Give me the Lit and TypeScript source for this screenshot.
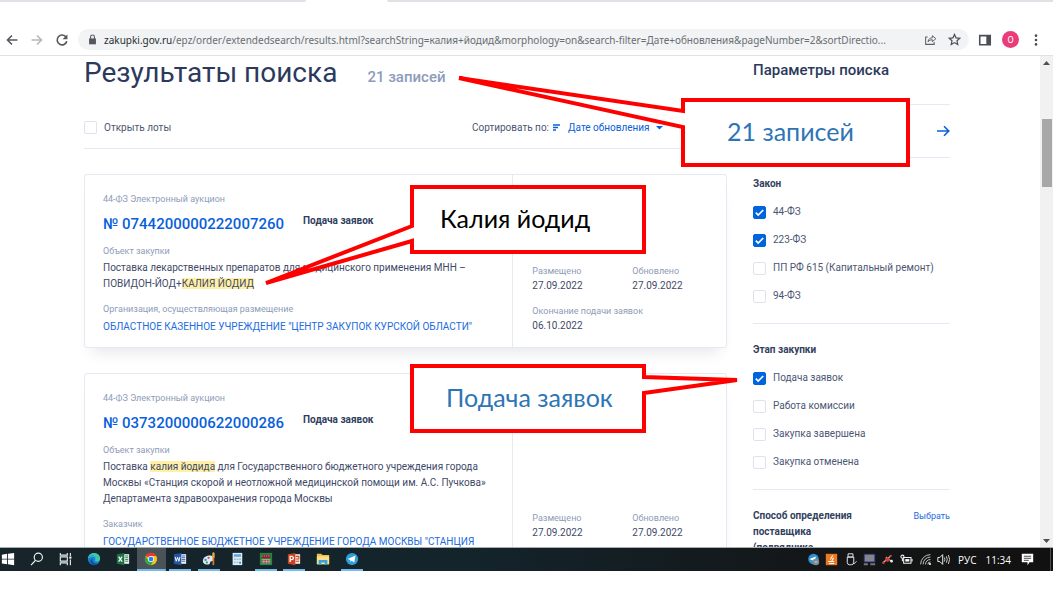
import { LitElement, html, css, svg, nothing } from "lit";
import { customElement, property } from "lit/decorators.js";
import { classMap } from "lit/directives/class-map.js";

interface Tender {
  type: string;
  number: string;
  stage: string;
  before: string;
  match: string;
  after: string;
  orgLabel: string;
  org: string;
  placed: string;
  updated: string;
  deadline?: string;
}

const tenders: Tender[] = [
  {
    type: "44-ФЗ Электронный аукцион",
    number: "№ 0744200000222007260",
    stage: "Подача заявок",
    before: "Поставка лекарственных препаратов для медицинского применения МНН – ПОВИДОН-ЙОД+",
    match: "КАЛИЯ ЙОДИД",
    after: "",
    orgLabel: "Организация, осуществляющая размещение",
    org: 'ОБЛАСТНОЕ КАЗЕННОЕ УЧРЕЖДЕНИЕ "ЦЕНТР ЗАКУПОК КУРСКОЙ ОБЛАСТИ"',
    placed: "27.09.2022",
    updated: "27.09.2022",
    deadline: "06.10.2022",
  },
  {
    type: "44-ФЗ Электронный аукцион",
    number: "№ 0373200000622000286",
    stage: "Подача заявок",
    before: "Поставка ",
    match: "калия йодида",
    after:
      " для Государственного бюджетного учреждения города Москвы «Станция скорой и неотложной медицинской помощи им. А.С. Пучкова» Департамента здравоохранения города Москвы",
    orgLabel: "Заказчик",
    org: 'ГОСУДАРСТВЕННОЕ БЮДЖЕТНОЕ УЧРЕЖДЕНИЕ ГОРОДА МОСКВЫ "СТАНЦИЯ',
    placed: "27.09.2022",
    updated: "27.09.2022",
  },
];

const laws = [
  { text: "44-ФЗ", on: true },
  { text: "223-ФЗ", on: true },
  { text: "ПП РФ 615 (Капитальный ремонт)", on: false },
  { text: "94-ФЗ", on: false },
];

const stages = [
  { text: "Подача заявок", on: true },
  { text: "Работа комиссии", on: false },
  { text: "Закупка завершена", on: false },
  { text: "Закупка отменена", on: false },
];

@customElement("check-item")
class CheckItem extends LitElement {
  @property() text = "";
  @property({ type: Boolean }) on = false;

  static styles = css`
    :host { display: block; }
    .item { display: flex; align-items: center; gap: 7px; font-size: 10px; line-height: 16px; color: #4c5673; }
    .box {
      appearance: none; flex: none; width: 13px; height: 13px; margin: 0;
      border: 1px solid #dfe2ec; border-radius: 2px; background: #fff;
    }
    .box:checked {
      border-color: #0065dc;
      background: #0065dc url("data:image/svg+xml,%3Csvg xmlns='http://www.w3.org/2000/svg' viewBox='0 0 11 11'%3E%3Cpath d='M1.8 5.6 4.2 8 9.2 3' fill='none' stroke='white' stroke-width='1.7'/%3E%3C/svg%3E") center / 11px no-repeat;
    }
  `;

  render() {
    return html`<label class="item"><input class="box" type="checkbox" .checked=${this.on} /><span>${this.text}</span></label>`;
  }
}

@customElement("tender-card")
class TenderCard extends LitElement {
  @property({ attribute: false }) tender!: Tender;

  static styles = css`
    :host { display: block; }
    .card {
      display: grid; grid-template-columns: minmax(0, 2fr) minmax(0, 1fr);
      border: 1px solid #e6e8f2; border-radius: 3px; background: #fff;
      box-shadow: 0 12px 14px -8px rgba(40, 50, 80, 0.12);
    }
    .info { padding: 16px 18px 11px; }
    .muted { margin: 0; font-size: 9px; line-height: 16px; color: #8e9cb8; }
    .head { display: flex; align-items: flex-start; gap: 19px; margin: 6px 0 8px; }
    .number { font-size: 15px; line-height: 22px; font-weight: 500; color: #0a5fdb; text-decoration: none; }
    .stage { font-size: 10px; line-height: 16px; font-weight: 700; color: #2f3d60; }
    .subject { margin: 1px 0 9px; font-size: 10px; line-height: 16px; color: #3f4a68; }
    .hit { background: #fff0a5; color: inherit; }
    .org { display: block; font-size: 10px; line-height: 19px; color: #226be0; text-decoration: none; white-space: nowrap; }
    .dates {
      display: grid; grid-template-columns: 100px 1fr; align-content: end; row-gap: 10px;
      border-left: 1px solid #e6e8f2; padding: 13px 0 13px 19px; margin: 0;
    }
    .short { padding-bottom: 21px; }
    .wide { grid-column: 1 / -1; }
    .term { font-size: 9px; line-height: 14px; color: #8e9cb8; }
    .date { margin: 0; font-size: 10px; line-height: 16px; color: #3f4a68; }
  `;

  render() {
    const t = this.tender;
    return html`
      <article class="card">
        <div class="info">
          <p class="muted">${t.type}</p>
          <div class="head">
            <a class="number" href="#">${t.number}</a>
            <span class="stage">${t.stage}</span>
          </div>
          <p class="muted">Объект закупки</p>
          <p class="subject">${t.before}<mark class="hit">${t.match}</mark>${t.after}</p>
          <p class="muted">${t.orgLabel}</p>
          <a class="org" href="#">${t.org}</a>
        </div>
        <dl class=${classMap({ dates: true, short: !t.deadline })}>
          <div><dt class="term">Размещено</dt><dd class="date">${t.placed}</dd></div>
          <div><dt class="term">Обновлено</dt><dd class="date">${t.updated}</dd></div>
          ${t.deadline
            ? html`<div class="wide"><dt class="term">Окончание подачи заявок</dt><dd class="date">${t.deadline}</dd></div>`
            : nothing}
        </dl>
      </article>
    `;
  }
}

const icon = (body: unknown, size = 16) =>
  html`<svg width=${size} height=${size} viewBox="0 0 16 16" fill="none" aria-hidden="true">${body}</svg>`;

const back = svg`<path d="M14.2 8H3M8 2.8 2.8 8 8 13.2" stroke="currentColor" stroke-width="1.8"/>`;
const forward = svg`<path d="M1.8 8H13M8 2.8 13.2 8 8 13.2" stroke="currentColor" stroke-width="1.8"/>`;
const reload = svg`<path d="M12.6 4.6A5.6 5.6 0 1 0 13.5 9.4" stroke="currentColor" stroke-width="1.9"/><path d="M14.2 1.6v5.6H8.6z" fill="currentColor"/>`;
const lock = svg`<path d="M3 6.4h10V15H3z" fill="#54585d"/><path d="M5.2 7V4.3a2.8 2.8 0 0 1 5.6 0V7" stroke="#54585d" stroke-width="1.6"/>`;
const share = svg`<path d="M4.5 5H2v9h10.500v-3" stroke="#5f6368" stroke-width="1.3"/><path d="M5 11c.3-3.600 2.300-5 5.300-5.100V3.300L14.600 7l-4.300 3.600V8.300C8 8.300 6.400 9 5 11z" stroke="#5f6368" stroke-width="1.200" stroke-linejoin="round"/>`;
const star = svg`<path d="m8 1.800 1.900 4.200 4.600.5-3.400 3.100.9 4.500L8 11.800l-4 2.300.9-4.500L1.500 6.500l4.600-.5z" stroke="#4b4f54" stroke-width="1.500"/>`;
const panel = svg`<path d="M2 3h12v10.500H2z" stroke="#4b4f54" stroke-width="1.800"/><path d="M9.500 3H14v10.500H9.500z" fill="#4b4f54"/>`;
const dots = svg`<g fill="#4b4f54"><circle cx="8" cy="3" r="1.500"/><circle cx="8" cy="8" r="1.500"/><circle cx="8" cy="13" r="1.500"/></g>`;

const apps = [
  { name: "Пуск", art: svg`<path d="M1 3l6-.9v5.500H1zM8 2l7-1v6.600H8zM1 8.500h6V14l-6-.9zM8 8.500h7V15l-7-1z" fill="#fff"/>` },
  { name: "Поиск", art: svg`<circle cx="9.500" cy="6" r="4.700" stroke="#f2f4f5" stroke-width="1.300"/><path d="M6.200 9.500 1.200 15" stroke="#f2f4f5" stroke-width="1.400"/>` },
  { name: "Представление задач", art: svg`<path d="M1.500 1v2.500h8V1M1.500 15v-2.500h8V15M1.500 5.500h8v5h-8zM13 1v3.500M13 8.500V15" stroke="#e8eaeb" stroke-width="1.300"/><path d="M11.800 5.200h2.400v2.400h-2.400z" fill="#fff"/>` },
  { name: "Edge", art: svg`<circle cx="8" cy="8" r="7" fill="#1680d2"/><path d="M1 7.500C1.300 3.500 4.300 1 8 1c4.200 0 7 2.900 7 6 0 2.500-1.800 3.900-3.900 3.900-1.500 0-2.400-.6-1.800-1.700.8-1.500.2-3.700-2.600-3.700-2.500 0-4.800.8-5.700 2z" fill="#42c6a0"/><path d="M1 7.500C1.600 4 5 2.800 7.500 3.600c2.200.7 2.700 2.600 2.400 4-.6-1.500-2-2.100-3.200-2-2.500.1-4.800.9-5.700 1.900z" fill="#29a8df"/><path d="M6.200 7.600c-1 3 1.500 6.200 6.400 5.500C10.200 15.600 5.500 15.500 4 12c-.8-2 .4-4 2.200-4.400z" fill="#104f9c"/>` },
  { name: "Excel", art: svg`<path d="M8 2.500h7v11H8z" fill="#eef6f0"/><path d="M10.500 4.500H14M10.500 6.500H14M10.500 8.500H14M10.500 10.500H14" stroke="#227447" stroke-width="1"/><path d="M1 2.500 9.500 1v14L1 13.500z" fill="#1f7145"/><path d="m3 5.300 4 5.600M7 5.300l-4 5.600" stroke="#fff" stroke-width="1.400"/>` },
  { name: "Chrome", active: true, run: true, art: svg`<circle cx="8" cy="8" r="7" fill="#fbc116"/><path d="M8 8 1.900 4.500A7 7 0 0 1 14.100 4.500H8z" fill="#e33b2e"/><path d="M1.900 4.500A7 7 0 0 0 8 15l3-5.200L5 9.700z" fill="#2da94f"/><circle cx="8" cy="8" r="3.500" fill="#fff"/><circle cx="8" cy="8" r="2.700" fill="#2f7de9"/>` },
  { name: "Word", run: true, art: svg`<path d="M8 2.500h7v11H8z" fill="#eef3fb"/><path d="M10 4.500h4M10 6.500h4M10 8.500h4M10 10.500h4" stroke="#2b579a" stroke-width="1"/><path d="M1 2.500 9.500 1v14L1 13.500z" fill="#2456a6"/><path d="m2.500 5.600 1.200 5 1.500-4.600 1.500 4.600 1.200-5" stroke="#fff" stroke-width="1.100"/>` },
  { name: "Paint", run: true, art: svg`<path d="M1 10.500C1 6.500 4.500 4 8.500 4c3.700 0 5.500 2.200 5 4.600-.4 2-2.400 1.700-3.500 2.200-1.200.6 0 3.600-3.600 3.600C3.500 14.400 1 13 1 10.500z" fill="#dbeaf5"/><circle cx="4" cy="9" r="1.300" fill="#2a83d6"/><circle cx="7.500" cy="6.700" r="1.300" fill="#e64b36"/><circle cx="5.500" cy="12" r="1.300" fill="#43a84a"/><path d="M13 6.500V15" stroke="#d07b28" stroke-width="2"/><path d="M11.700 1.500 13 0l1.500 1.500v5h-2.800z" fill="#f0a23a"/>` },
  { name: "Калькулятор", art: svg`<path d="M3 1h11v14H3z" fill="#dcebf6"/><path d="M4.500 2.500h8v3h-8z" fill="#5da9dd"/><path d="M4.500 7.500h2v1.500h-2zm3 0h2v1.500h-2zM4.500 11h2v1.500h-2zm3 0h2v1.500h-2zm3-3.500h2v1.500h-2z" fill="#9fb9cc"/><path d="M10.500 11h2v2.500h-2z" fill="#3f8cc6"/>` },
  { name: "Реестр", run: true, art: svg`<path d="M1 1h14v14H1z" fill="#1d8a3d"/><path d="M3 3h10v4H3z" fill="#8e2230"/><path d="M3 4.500h10" stroke="#dc8a8a" stroke-dasharray="1.500 1"/><path d="M3 8h10v5H3z" fill="#c4a5a0"/><path d="M3 9.500h10M3 11.800h10" stroke="#832c35" stroke-dasharray="2 1"/>` },
  { name: "PowerPoint", run: true, art: svg`<path d="M8 2.500h7v11H8z" fill="#fbe9e4"/><path d="M10 5h3.500v3H10M10 10.500h4" stroke="#cb4424" stroke-width="1.200"/><path d="M1 2.500 9.500 1v14L1 13.500z" fill="#cd4120"/><path d="M3.600 11.500V5h1.800a1.800 1.800 0 0 1 0 3.700H3.600" stroke="#fff" stroke-width="1.500"/>` },
  { name: "Проводник", art: svg`<path d="M1 2h5l1.500 1.500H15V14H1z" fill="#edc04d"/><path d="M1 5h14v9H1z" fill="#fbe08a"/><path d="M3 14.500V9h10v5.500h-3V12H6v2.500z" fill="#35a1e0"/>` },
  { name: "Telegram", run: true, art: svg`<circle cx="8" cy="8" r="7" fill="#2b9fd9"/><path d="m3 7.900 9-3.800-1.500 8-2.800-2-1.400 1.400-.3-2.500z" fill="#fff"/>` },
];

const tray = [
  svg`<circle cx="8" cy="7.500" r="6.500" fill="#2b93cf"/><path d="m3 7.500 8-3.200-1.200 5-3.800-.4z" fill="#fff"/><circle cx="11" cy="11" r="4" fill="#848b91"/><path d="M9.500 11h3" stroke="#e0e4e7"/>`,
  svg`<path d="M1 1h14v14H1z" fill="#ec7a22"/><path d="M9.500 3 6.500 8M10.500 6l-2 3.500M4 10.500h7M5 13h6.500" stroke="#fff" stroke-width="1.300"/>`,
  svg`<path d="M5 1h6v4H5zM4 5h8v6.500a3 3 0 0 1-3 3H7a3 3 0 0 1-3-3z" stroke="#e4e6e7" stroke-width="1.200"/><path d="m11 12 1.500 1.500L15.500 10" stroke="#e4e6e7"/>`,
  svg`<path d="M1.500 1.500h13V11h-13z" fill="#84868c" stroke="#30308c"/><path d="M1 12.500h5V15H1zm8 0h6V15H9z" fill="#74767c"/>`,
  svg`<path d="M2.500 12 7 8l5-4.500M6 5l6.500 5" stroke="#c3c6c8" stroke-width="1.400"/><path d="M5 6.500 8 5l2.500 2.500L9 11l-3-.8z" fill="#dc3b30"/><circle cx="3" cy="12" r="1.600" fill="#dc3b30"/><circle cx="13" cy="10" r="1.600" fill="#e9edef"/><circle cx="12" cy="3.500" r="1.400" fill="#dc3b30"/>`,
  svg`<path d="M4.500 5.500h9v7h-9z" stroke="#eceeef" stroke-width="1.300"/><path d="M6.500 7.500h5v3h-5z" fill="#fff"/><path d="M14 7.500h1.500v3H14z" fill="#eceeef"/><circle cx="3" cy="4.500" r="1.900" stroke="#eceeef" stroke-width="1.300"/><path d="M3 6.500v3.500" stroke="#eceeef" stroke-width="1.300"/>`,
  svg`<path d="M2 14A12 12 0 0 1 14 2M5 14a9 9 0 0 1 9-9M8 14a6 6 0 0 1 6-6M11 14a3 3 0 0 1 3-3" stroke="#c2c7ca" stroke-width="1.200"/><circle cx="13.500" cy="13.500" r="1.300" fill="#fff"/>`,
  svg`<path d="M1 5.500h2.500L7 2v12l-3.500-3.500H1z" stroke="#eceeef" stroke-width="1.200"/><path d="M9 5.500q1.500 2.500 0 5M11.500 4q2.300 4 0 8M14 2.500q3 5.500 0 11" stroke="#cfd3d5" stroke-width="1.200"/>`,
];

@customElement("app-root")
class AppRoot extends LitElement {
  static styles = css`
    :host {
      display: flex; flex-direction: column; box-sizing: border-box; position: relative;
      height: 100vh; padding: 0 11px 25px 0; overflow: hidden;
      background: #fff; font-family: Roboto, "Noto Sans", sans-serif;
    }
    svg { display: block; flex: none; }
    button { border: 0; padding: 0; background: none; font: inherit; color: inherit; display: grid; place-items: center; }

    .tabs { display: grid; grid-template-columns: 306px 81px 1fr; height: 2px; flex: none; background: #fff; }
    .tab-bg { background: #dee1e6; }
    .tab-left { border-bottom-right-radius: 3px; }
    .tab-right { border-bottom-left-radius: 3px; grid-column: 3; }

    .toolbar {
      display: flex; align-items: center; flex: none; padding: 27px 10px 5px 4px;
      border-bottom: 1px solid #dfe1e4; color: #54585d;
    }
    .nav { display: flex; gap: 9px; padding-right: 8px; }
    .nav-btn { width: 16px; height: 21px; }
    .dim { color: #b5b8bb; }
    .address {
      display: flex; align-items: center; flex: 1; min-width: 0; height: 21px; box-sizing: border-box;
      margin-right: 9px; padding: 0 8px 0 9px; border-radius: 11px; background: #f1f3f4;
      font-family: "Noto Sans", "Open Sans", sans-serif; font-size: 10px;
    }
    .domain { padding-left: 6px; color: #2b2e31; }
    .url {
      flex: 1; min-width: 0; border: 0; padding: 0; background: none; outline: 0;
      font: inherit; line-height: 16px; color: #6a6e73;
    }
    .address-tools { display: flex; gap: 11px; }
    .chrome-tools { display: flex; align-items: center; gap: 10px; }
    .avatar { width: 17px; height: 17px; border-radius: 50%; background: #ea3c78; color: #fff; font-size: 9px; }

    .window { display: flex; flex: 1; min-height: 0; border-bottom: 1px solid #a9adb0; }
    .page {
      display: grid; grid-template-columns: minmax(0, 643fr) minmax(0, 197fr); column-gap: 26px;
      align-content: start; flex: 1; min-width: 0; overflow: hidden; padding: 0 90px 0 84px;
    }
    .title-row { display: flex; align-items: baseline; gap: 30px; height: 48px; }
    .title { margin: 0; font-size: 28px; line-height: 33px; font-weight: 400; color: #2b3a5c; white-space: nowrap; }
    .count { font-size: 15px; font-weight: 500; color: #8c9cbc; white-space: nowrap; }
    .sort-row {
      display: flex; align-items: center; justify-content: space-between; height: 41px; padding: 3px 63px 0 0;
      border-bottom: 1px solid #e6e9f4; font-size: 10px; color: #4c5673;
    }
    .sort { display: flex; align-items: center; gap: 4px; }
    .sort-select {
      appearance: none; border: 0; padding: 0 0 0 4px; margin: 0; background: none; outline: 0;
      font: inherit; color: #0a5fdb;
    }
    .cards { display: grid; gap: 25px; padding-top: 25px; }

    .side-title { margin: 0; font-size: 15px; line-height: 28px; height: 48px; font-weight: 500; color: #2b3a5c; white-space: nowrap; }
    .go {
      display: flex; justify-content: flex-end; align-items: center; height: 52px;
      border-top: 1px solid #e3eaf3; border-bottom: 1px solid #e3eaf3; color: #0a5fdb;
    }
    .group { border: 0; margin: 0; min-width: 0; padding: 18px 0 19px; border-bottom: 1px solid #e3eaf3; display: grid; gap: 12px; }
    .group-title { margin: 0; font-size: 10px; line-height: 16px; font-weight: 700; color: #333f5e; }
    .method { display: flex; justify-content: space-between; align-items: flex-start; padding-top: 18px; }
    .method-title { width: 110px; }
    .pick { font-size: 9px; line-height: 16px; color: #226be0; text-decoration: none; }

    .scroll { display: flex; flex-direction: column; align-items: center; flex: none; width: 13px; background: #f1f1f1; padding: 5px 0 4px; }
    .thumb { width: 10px; height: 68px; margin: 54px 0 auto; background: #a8a8a8; }

    .taskbar {
      display: flex; align-items: center; flex: none; height: 23px; overflow: hidden;
      background: linear-gradient(90deg, #17242a, #13242b 45%, #141516 80%, #111);
    }
    .apps { display: grid; grid-template-columns: repeat(13, 1fr); width: 372px; height: 100%; margin-left: -6px; }
    .app { height: 100%; box-sizing: border-box; border-bottom: 2px solid transparent; }
    .run { background: linear-gradient(#76b9ed, #76b9ed) bottom / 22px 2px no-repeat border-box; }
    .active { background-color: #4a5358; background-size: 100% 2px; }
    .tray { display: flex; align-items: center; margin-left: auto; color: #fff; font-family: "Open Sans", sans-serif; font-size: 10px; }
    .tray-icons { display: grid; grid-template-columns: repeat(8, 1fr); justify-items: center; width: 149px; }
    .lang { padding-left: 5px; }
    .clock { padding: 0 10px 0 9px; }
    .edge { width: 1px; height: 23px; margin: 0 2px 0 16px; background: #4d5052; }

    .callout {
      position: absolute; box-sizing: border-box; height: 69px; padding-bottom: 4px; display: flex; align-items: center;
      font-family: Lato, "Open Sans", sans-serif; font-size: 25px; color: #2e75b6;
    }
    .shape { position: absolute; inset: 0; overflow: visible; }
    .label { position: relative; white-space: nowrap; }
    .c-count { left: 681px; top: 98px; width: 229px; padding-left: 46px; }
    .c-query { left: 410px; top: 185px; width: 236px; padding-left: 30px; color: #000; }
    .c-stage { left: 410px; top: 364px; width: 236px; padding-left: 36px; }
  `;

  private callout(name: string, width: number, points: string, text: string) {
    return html`<div class="callout ${name}">
      <svg class="shape" width=${width} height="69" aria-hidden="true">
        <polygon points=${points} fill="#fff" stroke="#f00" stroke-width="4" />
      </svg>
      <span class="label">${text}</span>
    </div>`;
  }

  private group(title: string, items: { text: string; on: boolean }[]) {
    return html`<section class="group">
      <h3 class="group-title">${title}</h3>
      ${items.map((i) => html`<check-item .text=${i.text} .on=${i.on}></check-item>`)}
    </section>`;
  }

  render() {
    return html`
      <div class="tabs"><div class="tab-bg tab-left"></div><div class="tab-bg tab-right"></div></div>
      <header class="toolbar">
        <nav class="nav">
          <button class="nav-btn" aria-label="Назад">${icon(back, 14)}</button>
          <button class="nav-btn dim" aria-label="Вперёд">${icon(forward, 14)}</button>
          <button class="nav-btn" aria-label="Обновить">${icon(reload, 14)}</button>
        </nav>
        <div class="address">
          ${icon(lock, 11)}
          <label class="domain" for="url">zakupki.gov.ru</label>
          <input class="url" id="url" type="text"
            .value=${"/epz/order/extendedsearch/results.html?searchString=калия+йодид&morphology=on&search-filter=Дате+обновления&pageNumber=2&sortDirectio..."} />
          <div class="address-tools">
            <button aria-label="Поделиться">${icon(share, 13)}</button>
            <button aria-label="Добавить в закладки">${icon(star, 13)}</button>
          </div>
        </div>
        <div class="chrome-tools">
          <button aria-label="Боковая панель">${icon(panel, 14)}</button>
          <button class="avatar">О</button>
          <button aria-label="Меню">${icon(dots, 14)}</button>
        </div>
      </header>

      <div class="window">
        <div class="page">
          <main>
            <div class="title-row"><h1 class="title">Результаты поиска</h1><span class="count">21 записей</span></div>
            <div class="sort-row">
              <check-item text="Открыть лоты"></check-item>
              <div class="sort">
                <label for="sort">Сортировать по:</label>
                <svg width="7" height="7" viewBox="0 0 7 7" aria-hidden="true"><path d="M0 1h7M0 3.500h5M0 6h3" stroke="#0a5fdb" stroke-width="1.600" /></svg>
                <select class="sort-select" id="sort"><option>Дате обновления</option></select>
                <svg width="10" height="4" viewBox="0 0 10 4" aria-hidden="true"><path d="M2 0h7L5.500 3.500z" fill="#0a5fdb" /></svg>
              </div>
            </div>
            <div class="cards">${tenders.map((t) => html`<tender-card .tender=${t}></tender-card>`)}</div>
          </main>
          <aside>
            <h2 class="side-title">Параметры поиска</h2>
            <div class="go">
              <button aria-label="Искать">
                <svg width="13" height="12" viewBox="0 0 13 12" fill="none" aria-hidden="true"><path d="M0 6h11.500M7 1.200 11.800 6 7 10.800" stroke="currentColor" stroke-width="1.600" /></svg>
              </button>
            </div>
            ${this.group("Закон", laws)} ${this.group("Этап закупки", stages)}
            <section class="method">
              <h3 class="group-title method-title">Способ определения поставщика (подрядчика,</h3>
              <a class="pick" href="#">Выбрать</a>
            </section>
          </aside>
        </div>
        <div class="scroll" aria-hidden="true">
          <svg width="7" height="4" viewBox="0 0 7 4"><path d="M0 4h7L3.500 0z" fill="#505050" /></svg>
          <div class="thumb"></div>
          <svg width="7" height="4" viewBox="0 0 7 4"><path d="M0 0h7L3.500 4z" fill="#505050" /></svg>
        </div>
      </div>

      <footer class="taskbar">
        <div class="apps">
          ${apps.map((a) => html`<button class=${classMap({ app: true, run: !!a.run, active: !!a.active })} aria-label=${a.name}>${icon(a.art, 14)}</button>`)}
        </div>
        <div class="tray">
          <div class="tray-icons">${tray.map((t) => icon(t, 13))}</div>
          <span class="lang">РУС</span><span class="clock">11:34</span>
          <button aria-label="Уведомления">${icon(svg`<path d="M1 1h14v10.500h-4.500L8 15v-3.500H1z" fill="#fff"/><path d="M3.500 4h9M3.500 6.500h9M3.500 9h6" stroke="#222" stroke-width="1"/>`, 13)}</button>
          <span class="edge"></span>
        </div>
      </footer>

      ${this.callout("c-count", 229, "2,2 227,2 227,67 2,67 2,29 -222,-20 2,13", "21 записей")}
      ${this.callout("c-query", 236, "2,2 234,2 234,67 2,67 2,56 -144,98 2,41", "Калия йодид")}
      ${this.callout("c-stage", 236, "2,2 234,2 234,13 327,16 234,29 234,67 2,67", "Подача заявок")}
    `;
  }
}
